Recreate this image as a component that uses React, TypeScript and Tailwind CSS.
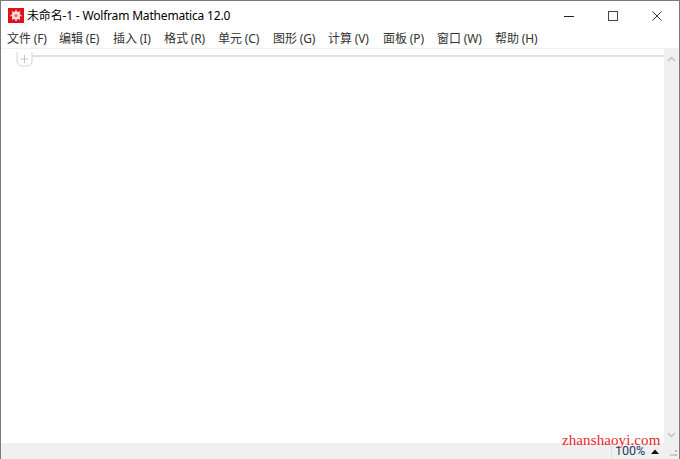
const cjk = '"Noto Sans CJK SC", sans-serif';

const menus = [
  { label: '文件 (F)', w: 'w-[52px]' },
  { label: '编辑 (E)', w: 'w-[54px]' },
  { label: '插入 (I)', w: 'w-[51px]' },
  { label: '格式 (R)', w: 'w-[54px]' },
  { label: '单元 (C)', w: 'w-[55px]' },
  { label: '图形 (G)', w: 'w-[55px]' },
  { label: '计算 (V)', w: 'w-[55px]' },
  { label: '面板 (P)', w: 'w-[54px]' },
  { label: '窗口 (W)', w: 'w-[58px]' },
  { label: '帮助 (H)', w: 'w-[60px]' },
];

function AppIcon() {
  return (
    <svg width="16" height="15" viewBox="0 0 16 15">
      <rect width="16" height="15" fill="#e3101a" />
      <g stroke="#f8c8c8" strokeWidth="1.6">
        <path d="M8 2v11M2.500 7.500h11M4.100 3.600l7.800 7.800M11.900 3.600l-7.800 7.800" />
      </g>
      <circle cx="8" cy="7.500" r="4" fill="#f9dede" />
      <circle cx="8" cy="7.500" r="1.600" fill="#e8636a" />
    </svg>
  );
}

export default function App() {
  return (
    <div
      className="relative flex h-[459px] w-[680px] flex-col overflow-hidden border-x border-t border-[#7a7a7a] bg-white text-[#1a1a1a]"
      style={{ fontFamily: '"Noto Sans", ' + cjk }}
    >
      <div className="flex h-[29px] shrink-0 items-center pl-[7px]">
        <AppIcon />
        <span className="ml-[3px] text-[12px] tracking-[-0.18px] text-black">未命名-1 - Wolfram Mathematica 12.0</span>
        <div className="ml-auto flex items-center">
          <svg width="10" height="10" viewBox="0 0 10 10" className="mr-[34px]">
            <path d="M0 5.500h10" stroke="#222" />
          </svg>
          <svg width="10" height="10" viewBox="0 0 10 10" className="mr-[34px]">
            <rect x="0.500" y="0.500" width="9" height="9" fill="none" stroke="#444" />
          </svg>
          <svg width="10" height="10" viewBox="0 0 10 10" className="mr-[17px]">
            <path d="M0.500 0.500l9 9M9.500 0.500l-9 9" stroke="#333" />
          </svg>
        </div>
      </div>

      <div className="flex h-[18px] shrink-0 items-center pl-[6px] text-[12px] tracking-[-0.12px] text-[#333]">
        {menus.map((m) => (
          <span key={m.label} className={`${m.w} whitespace-nowrap`}>
            {m.label}
          </span>
        ))}
      </div>
      <div className="h-[1px] shrink-0 bg-[#f0f0f0]" />

      <div className="flex min-h-0 flex-1">
        <div className="relative flex-1">
          <div className="mt-[6px] ml-[31px] h-[2px] bg-[#e0e0e0]" />
          <svg width="17" height="18" viewBox="0 0 17 18" className="absolute top-[1px] left-[15px]">
            <path d="M1 2v9a5 5 0 0 0 5 5h5a5 5 0 0 0 5-5v-9" fill="none" stroke="#d4d4d4" />
            <path d="M8.500 5v8M4.500 9h8" stroke="#c4c4c4" />
          </svg>
        </div>
        <div className="flex w-[15px] shrink-0 flex-col items-center justify-between bg-[#f0f0f0] pt-[7px] pb-[5px]">
          <svg width="9" height="6" viewBox="0 0 9 6">
            <path d="M1 5l3.500-3.500 3.500 3.500" fill="none" stroke="#c2c2c2" strokeWidth="1.500" />
          </svg>
          <svg width="9" height="6" viewBox="0 0 9 6">
            <path d="M1 1l3.500 3.500 3.500-3.500" fill="none" stroke="#c2c2c2" strokeWidth="1.500" />
          </svg>
        </div>
      </div>

      <div className="flex h-[16px] shrink-0 items-center bg-[#f0f0f0]">
        <div className="ml-auto flex h-full items-center border-l border-[#e0e0e0] pl-[3px]">
          <span
            className="mt-[1px] w-[36px] text-[12.5px] leading-none text-[#1f3a5f]"
            style={{ fontFamily: 'Roboto, sans-serif' }}
          >
            100%
          </span>
          <svg width="8" height="5" viewBox="0 0 8 5">
            <path d="M0 5l4-4.500 4 4.500z" fill="#111" />
          </svg>
          <svg width="7" height="6" viewBox="0 0 7 6" className="mt-[3px] mr-[2px] ml-[11px]">
            <path d="M5 0h2v2h-2zM2.500 4h2v2h-2zM5 4h2v2h-2zM0 4h1.500v2h-1.500z" fill="#bdbdbd" />
          </svg>
        </div>
      </div>

      <span
        className="absolute top-[433px] left-[561px] text-[15px] leading-[12px] tracking-[0.1px] whitespace-nowrap text-[#e8262c]"
        style={{ fontFamily: '"Liberation Serif", serif' }}
      >
        zhanshaoyi.com
      </span>
    </div>
  );
}
